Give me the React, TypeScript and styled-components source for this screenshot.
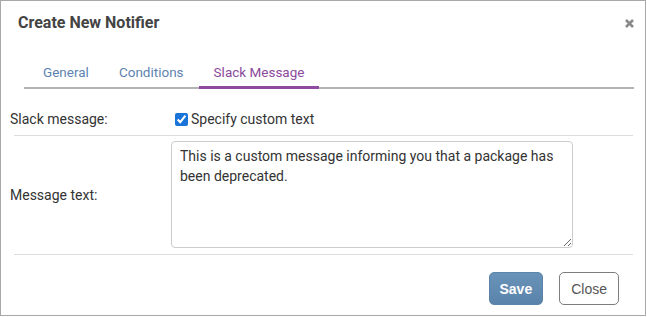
import styled, { createGlobalStyle } from "styled-components";

const GlobalStyle = createGlobalStyle`
  html, body {
    margin: 0;
    padding: 0;
    background: #fff;
  }
  body {
    font-family: Roboto, "Noto Sans", Arial, sans-serif;
    color: #333;
  }
  * {
    box-sizing: border-box;
  }
`;

const tabs = ["General", "Conditions", "Slack Message"];

const App = (): JSX.Element => {
  return (
    <>
      <GlobalStyle />
      <Dialog>
        <Header>
          <Title>Create New Notifier</Title>
          <CloseIcon aria-label="close">
            <svg width="9" height="9" viewBox="0 0 9 9">
              <path
                d="M1 1 L8 8 M8 1 L1 8"
                stroke="#8a8a8a"
                strokeWidth="2.6"
                strokeLinecap="butt"
              />
            </svg>
          </CloseIcon>
        </Header>

        <TabList>
          {tabs.map((tab) => (
            <Tab key={tab} $active={tab === "Slack Message"}>
              {tab}
            </Tab>
          ))}
        </TabList>

        <FormRow $top={20} $bottom={6}>
          <Label>Slack message:</Label>
          <CheckLabel>
            <input type="checkbox" defaultChecked />
            Specify custom text
          </CheckLabel>
        </FormRow>
        <Divider />
        <FormRow $top={5} $bottom={6}>
          <Label>Message text:</Label>
          <TextArea defaultValue="This is a custom message informing you that a package has been deprecated." />
        </FormRow>
        <Divider />

        <Footer>
          <SaveButton>Save</SaveButton>
          <CloseButton>Close</CloseButton>
        </Footer>
      </Dialog>
    </>
  );
};

export default App;

const Dialog = styled.div`
  width: 646px;
  height: 316px;
  border: 1px solid #a8a8a8;
  background: #fff;
  display: flex;
  flex-direction: column;
`;

const Header = styled.div`
  display: flex;
  align-items: center;
  justify-content: space-between;
  padding: 12px 11px 0 17px;
  height: 32px;
`;

const Title = styled.h1`
  margin: 0;
  font-size: 16px;
  line-height: 20px;
  font-weight: 700;
  color: #444;
`;

const CloseIcon = styled.span`
  display: flex;
  width: 9px;
  height: 9px;
  cursor: pointer;
`;

const TabList = styled.div`
  display: flex;
  margin: 30px 11px 0 23px;
  padding-left: 4px;
  border-bottom: 2px solid #b3b3b3;
`;

const Tab = styled.div<{ $active?: boolean }>`
  padding: 0 15px 5px;
  font-size: 13.5px;
  line-height: 18px;
  color: ${(props) => (props.$active ? "#8b4a9c" : "#5d83b1")};
  border-bottom: 3px solid
    ${(props) => (props.$active ? "#8e4a9e" : "transparent")};
  margin-bottom: -2px;
  cursor: pointer;
`;

const FormRow = styled.div<{ $top: number; $bottom: number }>`
  display: grid;
  grid-template-columns: 161px 1fr;
  align-items: center;
  padding: ${(props) => `${props.$top}px 0 ${props.$bottom}px 9px`};
`;

const Label = styled.label`
  font-size: 14px;
  line-height: 20px;
  color: #333;
`;

const CheckLabel = styled.label`
  display: flex;
  align-items: center;
  font-size: 14px;
  line-height: 20px;
  color: #333;

  input {
    width: 13px;
    height: 13px;
    margin: 1px 3px 0 4px;
    accent-color: #1a73d9;
  }
`;

const TextArea = styled.textarea`
  width: 402px;
  height: 107px;
  border: 1px solid #ccc;
  border-radius: 4px;
  padding: 4px 8px;
  font-family: Roboto, "Noto Sans", Arial, sans-serif;
  font-size: 14px;
  line-height: 20px;
  color: #333;
  resize: both;
  outline: none;
`;

const Divider = styled.hr`
  margin: 0 12px 0 13px;
  border: 0;
  border-top: 1px solid #dcdcdc;
  height: 0;
`;

const Footer = styled.div`
  display: flex;
  justify-content: flex-end;
  gap: 16px;
  padding: 17px 26px 0 0;
`;

const BaseButton = styled.button`
  height: 33px;
  border-radius: 5px;
  font-family: "Liberation Sans", Arial, sans-serif;
  font-size: 14px;
  cursor: pointer;
`;

const SaveButton = styled(BaseButton)`
  padding: 0 10px;
  font-weight: 700;
  color: #fff;
  background: linear-gradient(#6a93b9, #5983aa);
  border: 1px solid #5b84aa;
`;

const CloseButton = styled(BaseButton)`
  padding: 0 11px;
  color: #555;
  background: #fff;
  border: 1px solid #7d7d7d;
`;
